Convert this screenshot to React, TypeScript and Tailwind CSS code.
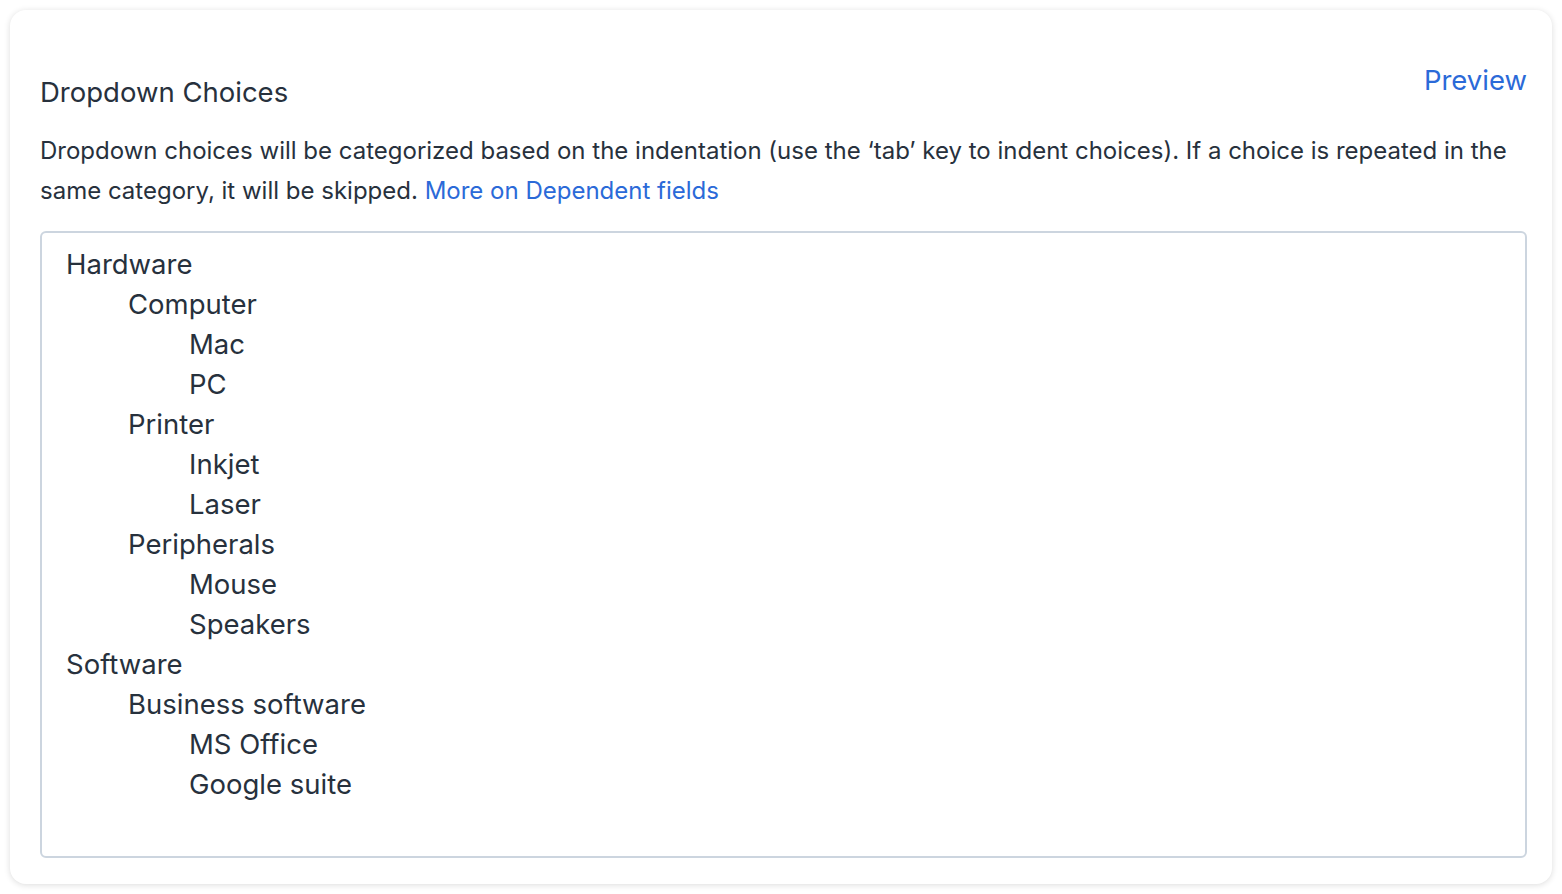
const choices: { label: string; level: number }[] = [
  { label: 'Hardware', level: 0 },
  { label: 'Computer', level: 1 },
  { label: 'Mac', level: 2 },
  { label: 'PC', level: 2 },
  { label: 'Printer', level: 1 },
  { label: 'Inkjet', level: 2 },
  { label: 'Laser', level: 2 },
  { label: 'Peripherals', level: 1 },
  { label: 'Mouse', level: 2 },
  { label: 'Speakers', level: 2 },
  { label: 'Software', level: 0 },
  { label: 'Business software', level: 1 },
  { label: 'MS Office', level: 2 },
  { label: 'Google suite', level: 2 },
]

const indent = ['pl-0', 'pl-[62px]', 'pl-[123px]']

export default function App() {
  return (
    <div className="min-h-screen bg-white p-[10px] font-['Inter',sans-serif] text-[#27313d]">
      <div className="h-[874px] rounded-2xl bg-white pl-[30px] pr-[25px] pt-[54px] shadow-[0_1px_6px_rgba(0,0,0,0.14)]">
        <div className="flex items-start justify-between">
          <h2 className="mt-[10px] text-[27.5px] leading-[36px] font-normal">Dropdown Choices</h2>
          <a className="text-[27.5px] leading-[32px] text-[#2b6ad8]">Preview</a>
        </div>
        <p className="mt-[21px] text-[24px] leading-[40px]">
          Dropdown choices will be categorized based on the indentation (use the ‘tab’ key to indent choices). If a
          choice is repeated in the same category, it will be skipped.{' '}
          <a className="text-[#2b6ad8]">More on Dependent fields</a>
        </p>
        <div className="mt-[20px] h-[627px] rounded-md border-2 border-[#ccd5df] px-[24px] pt-[11px]">
          {choices.map((c) => (
            <div key={c.label} className={`text-[27.5px] leading-[40px] ${indent[c.level]}`}>
              {c.label}
            </div>
          ))}
        </div>
      </div>
    </div>
  )
}
